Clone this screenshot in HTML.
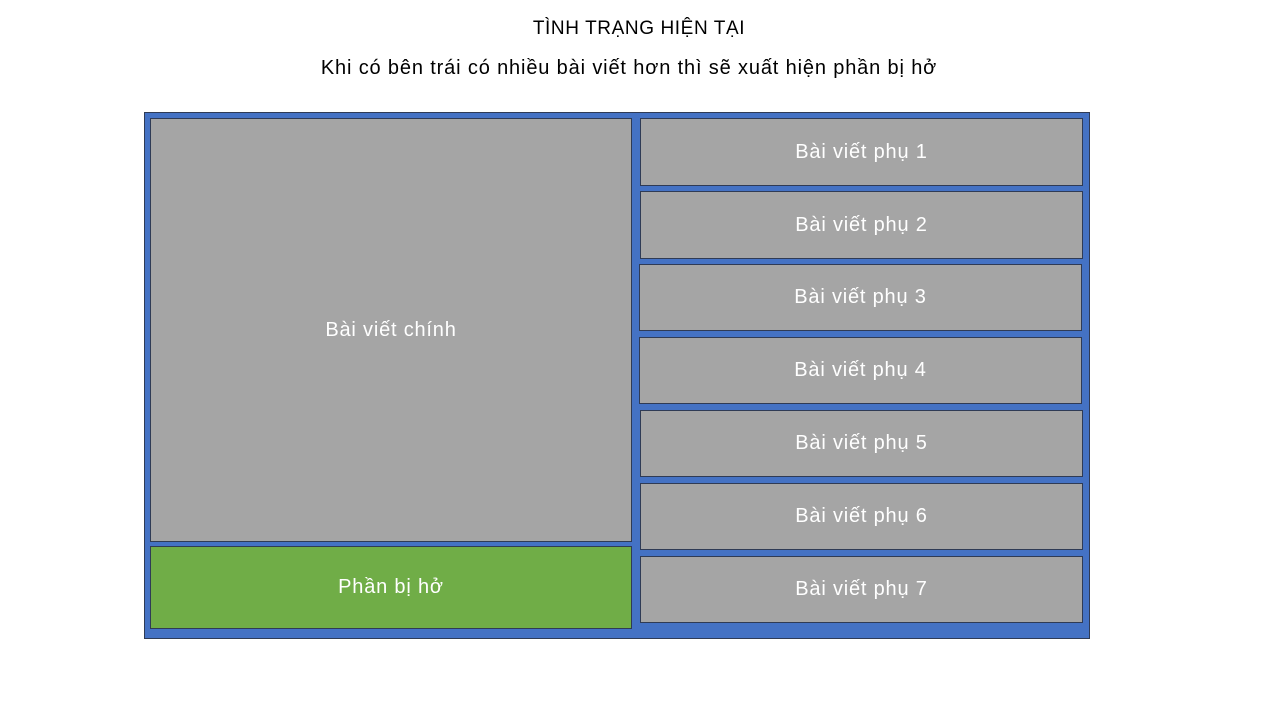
<!DOCTYPE html>
<html><head><meta charset="utf-8"><style>
body{margin:0;width:1280px;height:720px;background:#fff;position:relative;font-family:"Liberation Sans",sans-serif;overflow:hidden}
.t{position:absolute;left:0;width:1280px;text-align:center;font-size:19px;color:#000}
.b{position:absolute;box-sizing:border-box;border:1px solid #2f3b55;display:flex;align-items:center;justify-content:center;color:#fff;font-size:20px;letter-spacing:0.8px}
.g{background:#a5a5a5}
</style></head><body>
<div class="t" style="top:18px;left:-1px;letter-spacing:0.6px">TÌNH TRẠNG HIỆN TẠI</div>
<div class="t" style="top:57px;left:-11px;font-size:20px;letter-spacing:0.85px">Khi có bên trái có nhiều bài viết hơn thì sẽ xuất hiện phần bị hở</div>
<div class="b" style="left:144px;top:112px;width:946px;height:527px;background:#4472c4"></div>
<div class="b g" style="left:150px;top:118px;width:482px;height:424px">Bài viết chính</div>
<div class="b" style="left:150px;top:546px;width:482px;height:83px;background:#70ad47">Phần bị hở</div>
<div class="b g" style="left:640px;top:118px;width:443px;height:68px">Bài viết phụ 1</div>
<div class="b g" style="left:640px;top:191px;width:443px;height:68px">Bài viết phụ 2</div>
<div class="b g" style="left:639px;top:264px;width:443px;height:67px">Bài viết phụ 3</div>
<div class="b g" style="left:639px;top:337px;width:443px;height:67px">Bài viết phụ 4</div>
<div class="b g" style="left:640px;top:410px;width:443px;height:67px">Bài viết phụ 5</div>
<div class="b g" style="left:640px;top:483px;width:443px;height:67px">Bài viết phụ 6</div>
<div class="b g" style="left:640px;top:556px;width:443px;height:67px">Bài viết phụ 7</div>
</body></html>
